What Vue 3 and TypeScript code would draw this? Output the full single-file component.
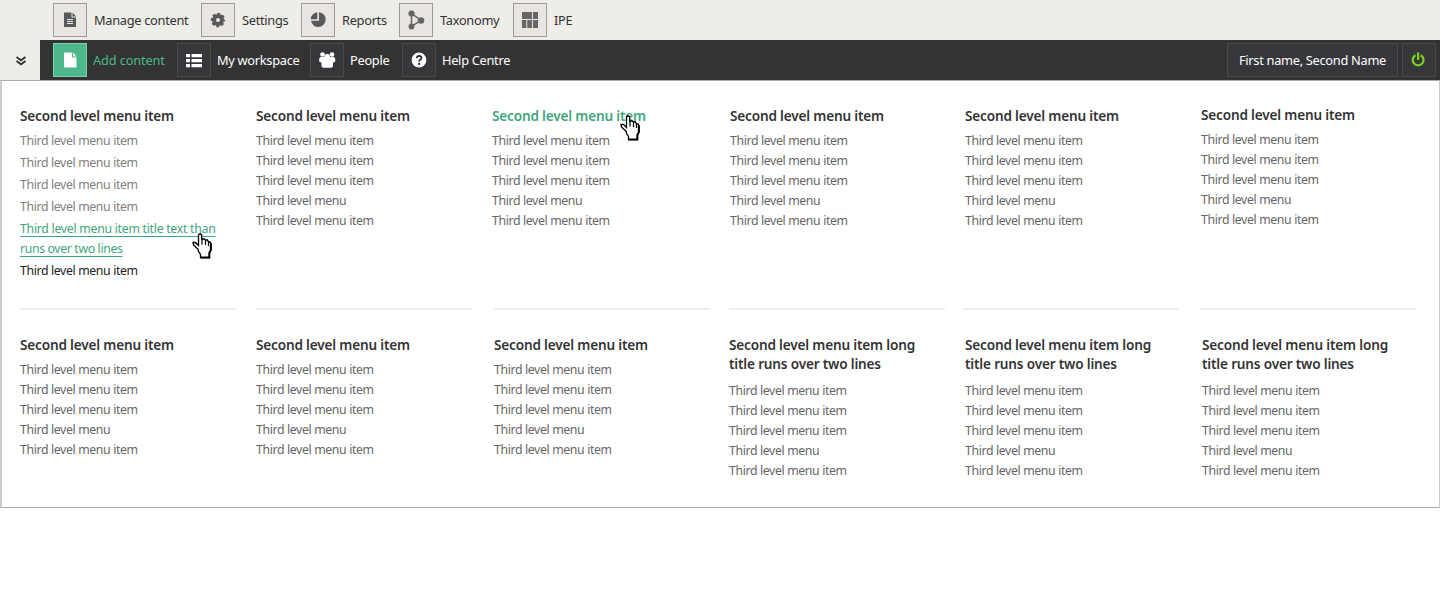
<script setup lang="ts">
interface Tool { label: string; icon: string; active?: boolean }
interface Entry { text: string; state?: string }
interface Group { title: string; entries: Entry[]; cls?: string; hover?: boolean }

const topTools: Tool[] = [
  { label: 'Manage content', icon: 'doc' },
  { label: 'Settings', icon: 'gear' },
  { label: 'Reports', icon: 'pie' },
  { label: 'Taxonomy', icon: 'tree' },
  { label: 'IPE', icon: 'grid' },
]
const mainTools: Tool[] = [
  { label: 'Add content', icon: 'file', active: true },
  { label: 'My workspace', icon: 'list' },
  { label: 'People', icon: 'people' },
  { label: 'Help Centre', icon: 'help' },
]
const item = 'Third level menu item'
const standard = (): Entry[] => [item, item, item, 'Third level menu', item].map((text) => ({ text }))
const title = 'Second level menu item'
const longTitle = 'Second level menu item long title runs over two lines'

const upper: Group[] = [
  {
    title,
    cls: 'roomy',
    entries: [
      { text: item }, { text: item }, { text: item }, { text: item },
      { text: 'Third level menu item title text than runs over two lines', state: 'hover' },
      { text: item, state: 'visited' },
    ],
  },
  { title, entries: standard() },
  { title, entries: standard(), hover: true },
  { title, entries: standard(), cls: 'u4' },
  { title, entries: standard(), cls: 'u5' },
  { title, entries: standard(), cls: 'u6' },
]
const lower: Group[] = [
  { title, entries: standard() },
  { title, entries: standard() },
  { title, entries: standard(), cls: 'l3' },
  { title: longTitle, entries: standard(), cls: 'long l4' },
  { title: longTitle, entries: standard(), cls: 'long l5' },
  { title: longTitle, entries: standard(), cls: 'long l6' },
]
</script>

<template>
  <div class="page">
    <svg class="defs" width="0" height="0" aria-hidden="true">
      <symbol id="doc" viewBox="0 0 20 20">
        <path fill="#58595b" d="M4 2.500h7.500V7.500H16V17H4z M12.500 2.500l3.500 4h-3.500z" />
        <path stroke="#e9e5e0" d="M7 9.500h6M7 11.500h6M7 13.500h6" />
      </symbol>
      <symbol id="gear" viewBox="0 0 20 20">
        <circle cx="10" cy="10" r="4" fill="none" stroke="#58595b" stroke-width="4" />
        <circle cx="10" cy="10" r="6" fill="none" stroke="#58595b" stroke-width="2.400" stroke-dasharray="2.800 1.912" stroke-dashoffset="1.400" />
      </symbol>
      <symbol id="pie" viewBox="0 0 20 20">
        <path fill="#58595b" d="M11 2.200a7.400 7.400 0 1 1-8 8.600h8z M9.300 2.300v6.900H2.700A7.200 7.200 0 0 1 9.300 2.300z" />
      </symbol>
      <symbol id="tree" viewBox="0 0 20 20">
        <path d="M5.500 3.500v13L15 10.500z" fill="none" stroke="#666" stroke-width="1.500" />
        <g fill="#666"><circle cx="5.500" cy="3.500" r="3.100" /><circle cx="5.500" cy="16.500" r="2.900" /><circle cx="15" cy="10.500" r="3.300" /></g>
      </symbol>
      <symbol id="grid" viewBox="0 0 20 20">
        <path fill="#666" d="M2 2h10v7H2zM13 2h5v7h-5zM2 10h4.300v8H2zM7.300 10H12v8H7.300zM13 10h5v8h-5z" />
      </symbol>
      <symbol id="file" viewBox="0 0 20 20">
        <path fill="#fff" d="M4 2.500h8V7.500h4.500V17.500H4z M13 2.500l3.500 4H13z" />
      </symbol>
      <symbol id="list" viewBox="0 0 20 20">
        <path fill="#fff" d="M2 4h4v3.300H2zM7.500 4H18v3.300H7.500zM2 9h4v3.300H2zM7.500 9H18v3.300H7.500zM2 14h4v3.300H2zM7.500 14H18v3.300H7.500z" />
      </symbol>
      <symbol id="people" viewBox="0 0 20 20">
        <g fill="#fff"><circle cx="5.500" cy="4.500" r="2.300" /><circle cx="15" cy="4.500" r="2.300" /><circle cx="10.200" cy="6.800" r="2.900" /><path d="M3.500 7h13.500l1.200 1.500v3l-2.200 1.200V16.500l-1.500 1.200H6l-1.500-1.200v-3.800l-2.300-1.200v-3z" /></g>
      </symbol>
      <symbol id="help" viewBox="0 0 20 20">
        <circle cx="10" cy="10" r="7.400" fill="#fff" />
        <path d="M7.600 8.200Q8 6 10.200 6Q12.400 6 12.400 7.900Q12.400 9 11.200 9.800Q10.100 10.500 10.100 11.600" fill="none" stroke="#333" stroke-width="1.800" />
        <path d="M9.100 12.800h2v2h-2z" fill="#333" />
      </symbol>
      <symbol id="hand" viewBox="0 0 20 26">
        <path d="M6.300 16.500L1.500 12L1 9.500H3.500L6.500 12.500V2L7.500 1H8.700L9.700 2V6H12.500L13.500 7H15.500L16.500 9H18L19 10.500V17L17.500 20V24.700H8.500V21.500L6.300 18z" fill="#fff" stroke="#000" stroke-width="1.300" />
        <path d="M10 6v5.500M13.500 7v5M16.500 9v4" fill="none" stroke="#000" stroke-width="1.200" />
        <path d="M18.800 10.500V17L17.300 20V24.500H8.500" fill="none" stroke="#000" stroke-width="1.900" />
      </symbol>
    </svg>

    <nav class="bar light">
      <a v-for="t in topTools" :key="t.label" class="tool" :class="t.icon">
        <span class="btn"><svg width="20" height="20"><use :href="'#' + t.icon" /></svg></span>
        <span class="label">{{ t.label }}</span>
      </a>
    </nav>
    <nav class="bar dark">
      <span class="toggle">
        <svg width="12" height="10" viewBox="0 0 12 10"><path d="M1.500 1l4.500 3.300L10.500 1M1.500 5l4.500 3.300L10.500 5" fill="none" stroke="#333" stroke-width="1.800" /></svg>
      </span>
      <a v-for="t in mainTools" :key="t.label" class="tool" :class="[t.icon, { active: t.active }]">
        <span class="btn"><svg width="20" height="20"><use :href="'#' + t.icon" /></svg></span>
        <span class="label">{{ t.label }}</span>
      </a>
      <span class="user"><span class="label">First name, Second Name</span></span>
      <span class="btn power">
        <svg width="20" height="20" viewBox="0 0 20 20" fill="none" stroke="#7ed321" stroke-width="2.200"><path d="M6.500 5.200a5.400 5.400 0 1 0 5.200 0M9.100 2.500v7.500" /></svg>
      </span>
    </nav>

    <main class="menu">
      <div class="row first">
        <section v-for="(g, i) in upper" :key="i" class="group" :class="g.cls">
          <h2 :class="{ hover: g.hover }"><span>{{ g.title }}</span><svg v-if="g.hover" class="hand" width="20" height="26"><use href="#hand" /></svg></h2>
          <ul>
            <li v-for="(e, j) in g.entries" :key="j" :class="e.state"><span>{{ e.text }}</span><svg v-if="e.state === 'hover'" class="hand" width="20" height="26"><use href="#hand" /></svg></li>
          </ul>
        </section>
      </div>
      <div class="row rules"><hr v-for="n in 6" :key="n" :class="'r' + n"></div>
      <div class="row">
        <section v-for="(g, i) in lower" :key="i" class="group" :class="g.cls">
          <h2><span>{{ g.title }}</span></h2>
          <ul>
            <li v-for="(e, j) in g.entries" :key="j"><span>{{ e.text }}</span></li>
          </ul>
        </section>
      </div>
    </main>
  </div>
</template>

<style>
body { background: #fff; }
</style>
<style scoped>
.page { width: 1440px; height: 600px; overflow: hidden; font-family: "Noto Sans", sans-serif; font-size: 12.8px; letter-spacing: -0.29px; color: #333; }
.defs { position: absolute; }
.bar { display: flex; align-items: center; height: 40px; box-sizing: border-box; }
.light { background: #eeede8; padding-left: 53px; }
.dark { background: #333; color: #fff; padding-right: 4px; }
.toggle { width: 40px; height: 40px; margin-right: 13px; padding: 2px 0 0 1px; box-sizing: border-box; background: #eeede8; display: flex; align-items: center; justify-content: center; }
.tool { display: flex; align-items: center; gap: 7px; white-space: nowrap; }
.dark .tool { gap: 6px; }
.btn { width: 34px; height: 34px; box-sizing: border-box; border: 1px solid #999; background: #e9e5e0; display: flex; align-items: center; justify-content: center; flex: none; }
.dark .btn { background: #36373b; border-color: #4a4a4a; }
.dark .active .btn { background: #4cb88c; border-color: #7fd3b1; }
.active { color: #4cb88c; letter-spacing: -0.15px; }
.doc { width: 148px; } .gear { width: 100px; } .pie { width: 98px; } .tree { width: 114px; }
.file { width: 124px; } .list { width: 133px; } .people { width: 92px; }
.user { margin-left: auto; margin-right: 4px; width: 171px; height: 34px; box-sizing: border-box; border: 1px solid #4a4a4a; background: #36373b; display: flex; align-items: center; padding-left: 11px; white-space: nowrap; }
.menu { height: 428px; box-sizing: border-box; border: 1px solid #aaa; border-left: 2px solid #ccc; border-right-color: #ccc; padding: 25px 0 0 18px; }
.row { display: grid; grid-template-columns: repeat(6, 236px); width: 1416px; }
.first { height: 202px; }
.rules { height: 27px; }
hr { width: 216px; height: 2px; margin: 0; border: 0; background: #ededed; }
.r3 { margin-left: 2px; } .r4 { margin-left: 1px; } .r5 { margin-left: -1px; }
.u4 { margin-left: 2px; } .u5 { margin-left: 1px; } .u6 { margin: -1px 0 0 1px; }
.l3 { margin-left: 2px; } .l4 { margin-left: 1px; } .l5 { margin-left: 1px; } .l6 { margin-left: 2px; }
h2 { font-size: 13.6px; line-height: 19px; letter-spacing: -0.18px; font-weight: 600; margin: 0; position: relative; width: 200px; }
h2.hover, li.hover { color: #3fa67c; }
ul { list-style: none; margin: 6px 0 0; padding: 0; }
.long ul { margin-top: 8px; }
li { font-size: 12.3px; line-height: 20px; letter-spacing: -0.37px; color: #666; position: relative; width: 205px; }
.roomy li { margin-bottom: 2px; color: #808080; }
.roomy li.hover { color: #3fa67c; text-decoration: underline; text-underline-offset: 3px; }
li.hover::first-line { letter-spacing: -0.28px; }
.roomy li.visited { color: #222; }
.hand { position: absolute; left: 172px; top: 14px; }
h2 .hand { left: 128px; top: 9px; }
</style>
